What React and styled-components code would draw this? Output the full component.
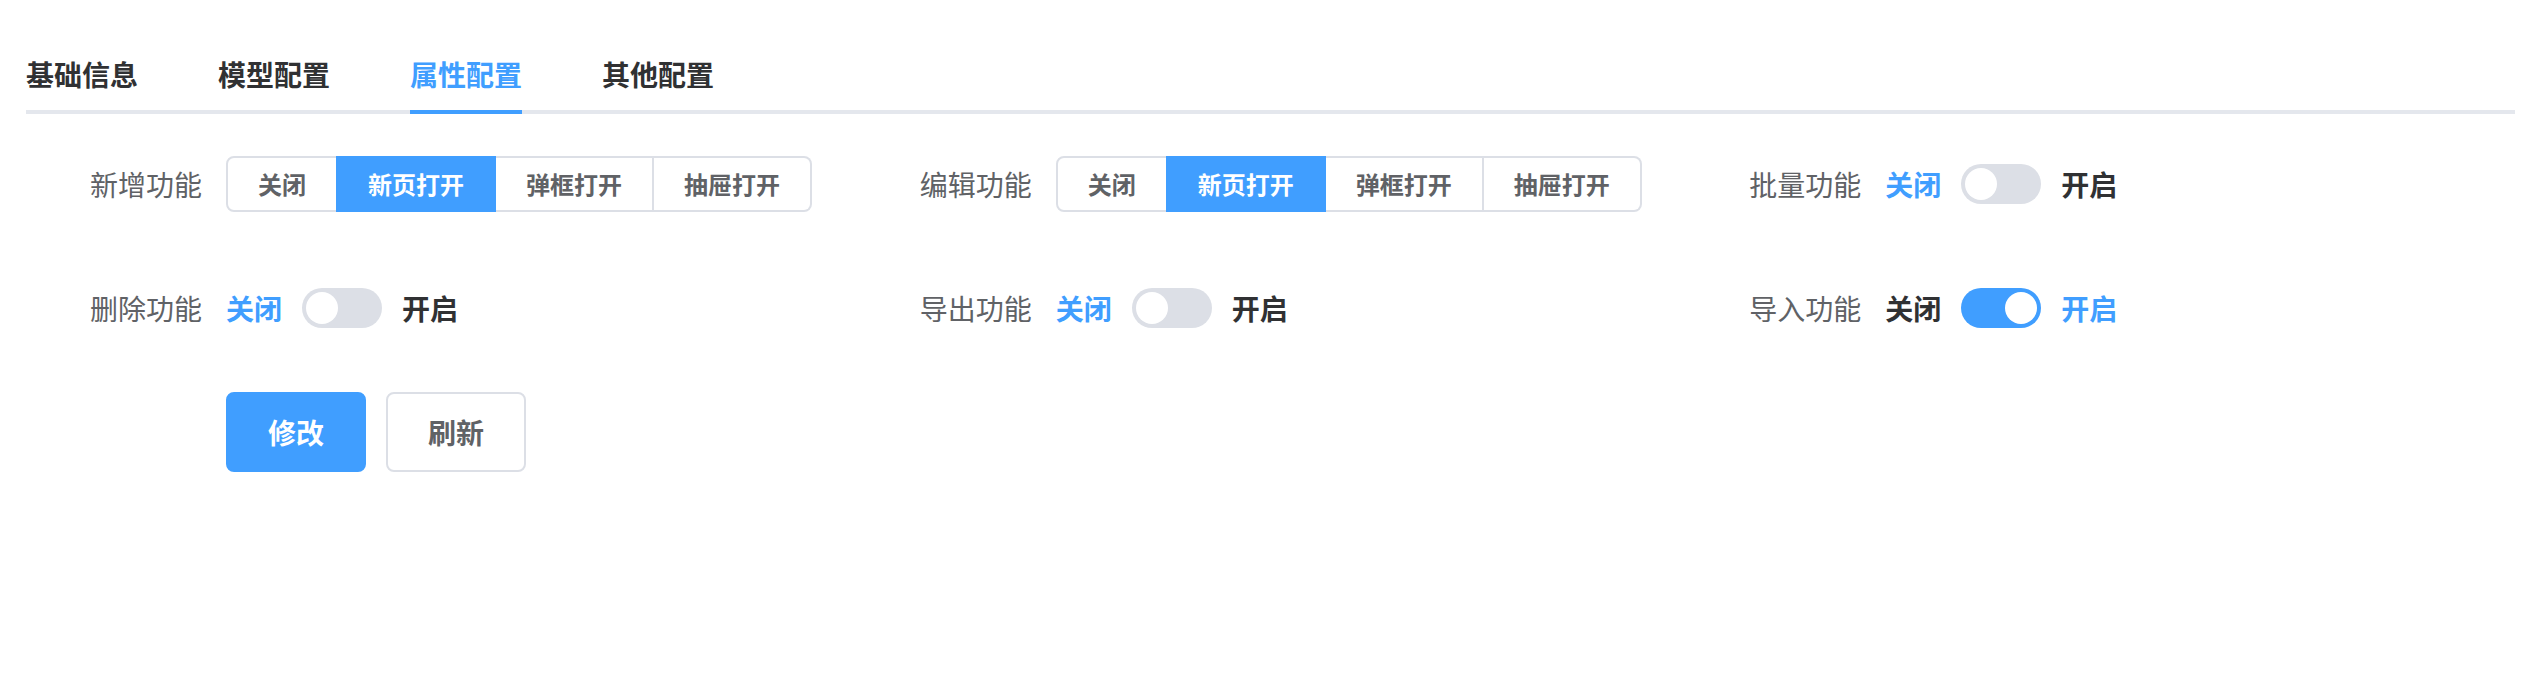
import React, { useState } from "react";
import styled, { createGlobalStyle } from "styled-components";

const GlobalStyle = createGlobalStyle`
  html, body {
    margin: 0;
    padding: 0;
    background: #fff;
  }
  body {
    font-family: "Noto Sans CJK SC", "Noto Sans", sans-serif;
    color: #606266;
  }
  * {
    box-sizing: border-box;
  }
`;

const tabs = ["基础信息", "模型配置", "属性配置", "其他配置"];
const openModes = ["关闭", "新页打开", "弹框打开", "抽屉打开"];

const fields = [
  { label: "新增功能", type: "radio", value: "新页打开" },
  { label: "编辑功能", type: "radio", value: "新页打开" },
  { label: "批量功能", type: "switch", value: false },
  { label: "删除功能", type: "switch", value: false },
  { label: "导出功能", type: "switch", value: false },
  { label: "导入功能", type: "switch", value: true },
];

const RadioGroupField = ({ value }) => {
  const [current, setCurrent] = useState(value);
  return (
    <RadioGroup>
      {openModes.map((m) => (
        <RadioButton
          key={m}
          $active={m === current}
          onClick={() => setCurrent(m)}
        >
          {m}
        </RadioButton>
      ))}
    </RadioGroup>
  );
};

const SwitchField = ({ value }) => {
  const [on, setOn] = useState(value);
  return (
    <SwitchWrap>
      <SwitchText $active={!on}>关闭</SwitchText>
      <SwitchCore $on={on} onClick={() => setOn(!on)} />
      <SwitchText $active={on}>开启</SwitchText>
    </SwitchWrap>
  );
};

const App = () => {
  const [active, setActive] = useState(2);

  return (
    <Page>
      <GlobalStyle />
      <TabsHeader>
        {tabs.map((t, idx) => (
          <TabItem key={t} onClick={() => setActive(idx)}>
            <TabLabel $active={idx === active}>{t}</TabLabel>
          </TabItem>
        ))}
      </TabsHeader>

      <Form>
        <FieldGrid>
          {fields.map((f) => (
            <FormItem key={f.label}>
              <Label>{f.label}</Label>
              <Content>
                {f.type === "radio" ? (
                  <RadioGroupField value={f.value} />
                ) : (
                  <SwitchField value={f.value} />
                )}
              </Content>
            </FormItem>
          ))}
        </FieldGrid>
        <Actions>
          <Button $primary>修改</Button>
          <Button>刷新</Button>
        </Actions>
      </Form>
    </Page>
  );
};

export default App;

const Page = styled("div")`
  padding: 34px 31px 0 26px;
`;

const TabsHeader = styled("div")`
  display: flex;
  height: 80px;
  box-shadow: inset 0 -4px 0 #e4e7ed;
  margin-bottom: 30px;
`;

const TabItem = styled("div")`
  padding: 0 40px;
  cursor: pointer;

  &:first-child {
    padding-left: 0;
  }
  &:last-child {
    padding-right: 0;
  }
`;

const TabLabel = styled("span")`
  display: block;
  height: 80px;
  line-height: 80px;
  font-size: 28px;
  font-weight: 600;
  color: ${(p) => (p.$active ? "#409eff" : "#303133")};
  box-shadow: ${(p) => (p.$active ? "inset 0 -4px 0 #409eff" : "none")};
`;

const Form = styled("div")`
  display: flex;
  flex-direction: column;
  gap: 44px;
`;

const FieldGrid = styled("div")`
  display: grid;
  grid-template-columns: repeat(3, 1fr);
  row-gap: 44px;
`;

const FormItem = styled("div")`
  display: flex;
  height: 80px;
`;

const Label = styled("label")`
  width: 200px;
  flex-shrink: 0;
  padding-right: 24px;
  text-align: right;
  line-height: 80px;
  font-size: 28px;
  color: #606266;
`;

const Content = styled("div")`
  display: flex;
  align-items: center;
`;

const RadioGroup = styled("div")`
  display: inline-flex;
`;

const RadioButton = styled("span")`
  display: inline-block;
  padding: 14px 30px;
  font-size: 24px;
  line-height: 24px;
  font-weight: 600;
  white-space: nowrap;
  cursor: pointer;
  border: 2px solid ${(p) => (p.$active ? "#409eff" : "#dcdfe6")};
  border-left: 0;
  background: ${(p) => (p.$active ? "#409eff" : "#fff")};
  color: ${(p) => (p.$active ? "#fff" : "#606266")};
  box-shadow: ${(p) => (p.$active ? "-2px 0 0 0 #409eff" : "none")};

  &:first-child {
    border-left: 2px solid ${(p) => (p.$active ? "#409eff" : "#dcdfe6")};
    border-radius: 8px 0 0 8px;
  }
  &:last-child {
    border-radius: 0 8px 8px 0;
  }
`;

const SwitchWrap = styled("div")`
  display: inline-flex;
  align-items: center;
  gap: 20px;
`;

const SwitchText = styled("span")`
  font-size: 28px;
  font-weight: 600;
  color: ${(p) => (p.$active ? "#409eff" : "#303133")};
`;

const SwitchCore = styled("span")`
  position: relative;
  display: inline-block;
  width: 80px;
  height: 40px;
  border-radius: 20px;
  background: ${(p) => (p.$on ? "#409eff" : "#dcdfe6")};
  cursor: pointer;

  &::after {
    content: "";
    position: absolute;
    top: 4px;
    left: ${(p) => (p.$on ? "44px" : "4px")};
    width: 32px;
    height: 32px;
    border-radius: 50%;
    background: #fff;
  }
`;

const Actions = styled("div")`
  display: flex;
  align-items: center;
  gap: 20px;
  height: 80px;
  padding-left: 200px;
`;

const Button = styled("button")`
  font-family: inherit;
  font-size: 28px;
  line-height: 28px;
  font-weight: 600;
  padding: 24px 40px;
  border-radius: 8px;
  cursor: pointer;
  border: 2px solid ${(p) => (p.$primary ? "#409eff" : "#dcdfe6")};
  background: ${(p) => (p.$primary ? "#409eff" : "#fff")};
  color: ${(p) => (p.$primary ? "#fff" : "#606266")};
`;
